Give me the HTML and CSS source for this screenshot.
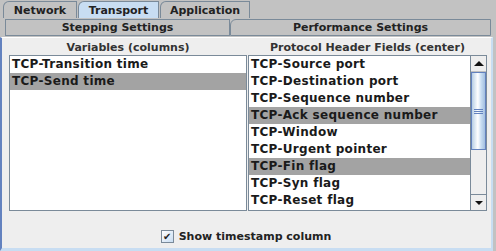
FILE: index.html
```
<!DOCTYPE html>
<html>

<head>
    <title>Transport</title>
    <meta charset="utf-8">
    <link rel="stylesheet" href="styles.css">
</head>

<body>
    <div class="tabrow top">
        <div class="tab">Network</div>
        <div class="tab selected">Transport</div>
        <div class="tab">Application</div>
    </div>
    <div class="tabrow second">
        <div class="tab wide stepping">Stepping Settings</div>
        <div class="tab wide perf">Performance Settings</div>
    </div>
    <div class="content">
        <div class="columns">
            <div class="col">
                <div class="head">Variables (columns)</div>
                <div class="list">
                    <div class="rows">
                        <div class="row">TCP-Transition time</div>
                        <div class="row sel">TCP-Send time</div>
                    </div>
                </div>
            </div>
            <div class="col">
                <div class="head">Protocol Header Fields (center)</div>
                <div class="list">
                    <div class="rows">
                        <div class="row">TCP-Source port</div>
                        <div class="row">TCP-Destination port</div>
                        <div class="row">TCP-Sequence number</div>
                        <div class="row sel">TCP-Ack sequence number</div>
                        <div class="row">TCP-Window</div>
                        <div class="row">TCP-Urgent pointer</div>
                        <div class="row sel">TCP-Fin flag</div>
                        <div class="row">TCP-Syn flag</div>
                        <div class="row">TCP-Reset flag</div>
                    </div>
                    <div class="scrollbar">
                        <div class="btn up"></div>
                        <div class="track">
                            <div class="thumb"><span class="grip"></span></div>
                        </div>
                        <div class="btn down"></div>
                    </div>
                </div>
            </div>
        </div>
        <div class="check">
            <span class="box">&#10004;</span>
            <span>Show timestamp column</span>
        </div>
    </div>
</body>

</html>
```

FILE: styles.css
```
body {
    margin: 0;
    width: 496px;
    height: 251px;
    overflow: hidden;
    background: #c2c2c2;
    font-family: "DejaVu Sans", sans-serif;
    font-weight: bold;
    font-size: 11px;
    color: #222;
}

.tabrow {
    display: flex;
    height: 18px;
}

.tabrow.top {
    padding: 1px 0 0 3px;
    height: 17px;
}

.tabrow.second {
    padding: 1px 0 0 5px;
    height: 17px;
}

.tab {
    box-sizing: border-box;
    border: 1px solid #7a8a99;
    border-bottom: none;
    border-top-left-radius: 6px;
    background: #c2c2c2;
    display: flex;
    align-items: center;
    justify-content: center;
    margin-right: 1px;
}

.top .tab {
    width: 74px;
}

.top .tab:nth-child(2) {
    width: 81px;
}

.top .tab:nth-child(3) {
    width: 90px;
}

.tab.selected {
    background: #c8ddf2;
}

.tab.wide {
    border-bottom: 1px solid #7a8a99;
    margin-right: 0;
}

.tab.stepping {
    width: 225px;
    border-top-left-radius: 0;
}

.tab.perf {
    width: 261px;
    border-top-left-radius: 6px;
}

.content {
    box-sizing: border-box;
    margin-top: 1px;
    width: 493px;
    height: 214px;
    background: #eeeeee;
    border-top: 1px solid #ffffff;
    border-left: 2px solid #6382bf;
    border-right: 2px solid #c8ddf2;
    border-bottom: 3px solid #c8ddf2;
    padding: 2px 4px 0 7px;
}

.columns {
    display: grid;
    grid-template-columns: 238px 239px;
    column-gap: 1px;
}

.head {
    text-align: center;
    height: 15px;
    line-height: 15px;
    color: #333;
}

.list {
    box-sizing: border-box;
    height: 156px;
    border: 1px solid #7a8a99;
    background: #fff;
    display: flex;
}

.rows {
    flex: 1;
}

.row {
    height: 17px;
    line-height: 17px;
    padding-left: 2px;
    font-size: 12px;
    letter-spacing: 0.3px;
    color: #1a1a1a;
}

.row.sel {
    background: #a3a3a3;
}

.scrollbar {
    width: 15px;
    border-left: 1px solid #7a8a99;
    background: #eeeeee;
    display: flex;
    flex-direction: column;
}

.btn {
    height: 15px;
    background: #eeeeee;
    border-bottom: 1px solid #c0c0c0;
    display: flex;
    align-items: center;
    justify-content: center;
}

.btn.down {
    border-top: 1px solid #7a8a99;
    border-bottom: none;
}

.btn.up::after {
    content: "";
    border-left: 5px solid transparent;
    border-right: 5px solid transparent;
    border-bottom: 5px solid #111;
}

.btn.down::after {
    content: "";
    border-left: 4px solid transparent;
    border-right: 4px solid transparent;
    border-top: 4px solid #111;
}

.track {
    flex: 1;
}

.thumb {
    box-sizing: border-box;
    height: 78px;
    border: 1px solid #6382bf;
    background: linear-gradient(to right, #b8cfe5, #ffffff 45%, #c8ddf2 70%, #a3bfe0);
    display: flex;
    align-items: center;
    justify-content: center;
}

.grip {
    width: 9px;
    height: 5px;
    background: repeating-linear-gradient(to bottom, #6382bf 0 1px, transparent 1px 2px);
}

.check {
    display: flex;
    align-items: center;
    justify-content: center;
    gap: 5px;
    margin-top: 19px;
    padding-right: 4px;
}

.box {
    box-sizing: border-box;
    width: 13px;
    height: 13px;
    border: 1px solid #7a8a99;
    background: linear-gradient(135deg, #ffffff, #c8ddf2);
    font-size: 10px;
    line-height: 11px;
    text-align: center;
    color: #222;
}
```
